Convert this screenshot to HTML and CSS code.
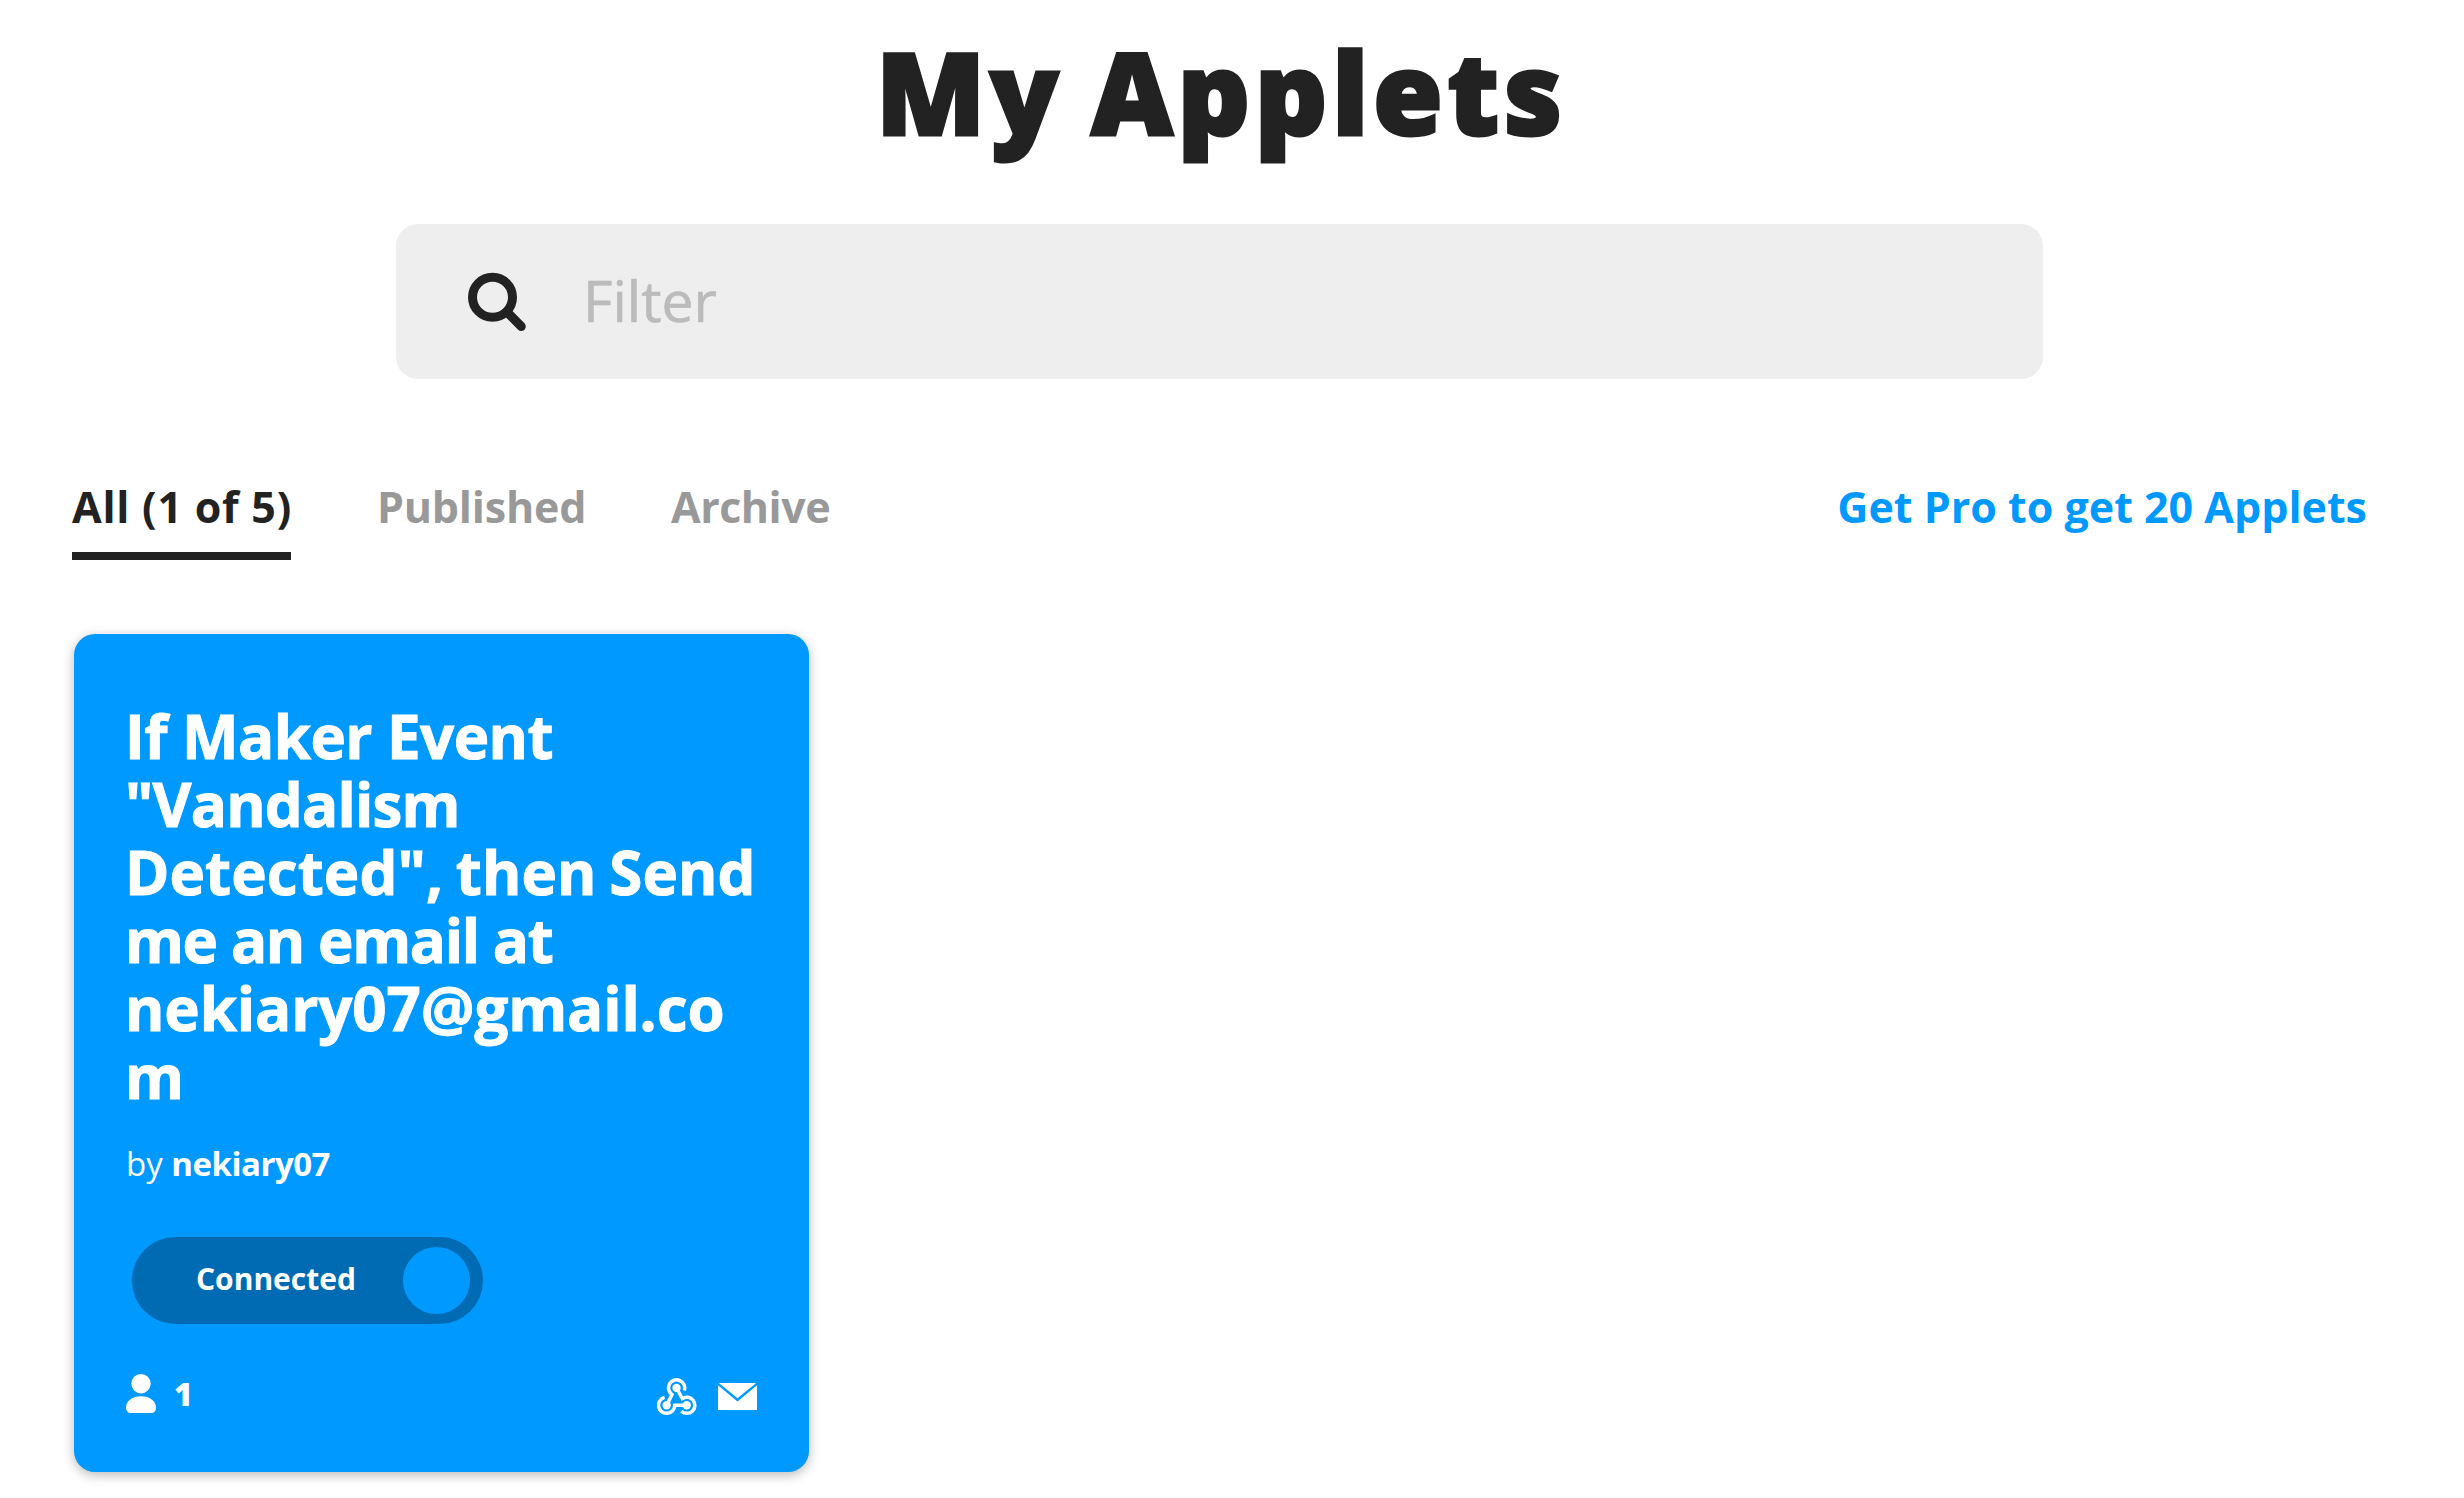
FILE: index.html
```html
<!DOCTYPE html>
<html lang="en">
<head>
<meta charset="utf-8">
<title>My Applets</title>
<link rel="stylesheet" href="styles.css">
</head>
<body>
<main class="page">
  <h1 class="page-title">My Applets</h1>
  <div class="search">
    <svg class="search-icon" viewBox="0 0 60 60" fill="none" stroke="#222" stroke-width="9" stroke-linecap="round">
      <circle cx="25.500" cy="25.300" r="20"/>
      <path d="M40 40L54.300 54.500"/>
    </svg>
    <span class="search-placeholder">Filter</span>
  </div>
  <nav class="tabs">
    <a class="tab tab-active">All (1 of 5)</a>
    <a class="tab tab-published">Published</a>
    <a class="tab tab-archive">Archive</a>
    <a class="pro-link">Get Pro to get 20 Applets</a>
  </nav>
  <article class="card">
    <h2 class="card-title">
      <span class="line line-1">If Maker Event</span>
      <span class="line line-2">"Vandalism</span>
      <span class="line line-3">Detected", then Send</span>
      <span class="line line-4">me an email at</span>
      <span class="line line-5">nekiary07@gmail.co</span>
      <span class="line">m</span>
    </h2>
    <p class="author">by <b>nekiary07</b></p>
    <div class="toggle">
      <span class="toggle-label">Connected</span>
      <span class="toggle-knob"></span>
    </div>
    <footer class="card-footer">
      <svg class="user-icon" viewBox="0 0 30 40" fill="#fff">
        <circle cx="15" cy="9.700" r="9.700"/>
        <path d="M15 22.200C23.500 22.200 30 27 30 33.500C30 37 28 39 25 39H5C2 39 0 37 0 33.500C0 27 6.500 22.200 15 22.200Z"/>
      </svg>
      <span class="count">1</span>
      <svg class="hook-icon" viewBox="0 0 40 38" fill="none" stroke="#fff" stroke-width="3.500">
        <g fill="#fff" stroke="none">
          <circle cx="19.500" cy="9.900" r="4.200"/>
          <circle cx="9.700" cy="27.200" r="4.200"/>
          <circle cx="29.700" cy="27.200" r="4.200"/>
        </g>
        <path d="M27.300 12.500A8.100 8.100 0 1 0 15 16.600L9.700 27.200"/>
        <path d="M7.600 19.400A8.100 8.100 0 1 0 17.700 27.200H29.700"/>
        <path d="M19.500 9.900L25.300 20.500A8.100 8.100 0 1 1 24.300 33.200"/>
      </svg>
      <svg class="mail-icon" viewBox="0 0 39 27" fill="#fff">
        <path d="M0.800 0H38.200L19.500 15.300Z"/>
        <path d="M0 2.300L19.500 18.600L39 2.300V27H0Z"/>
      </svg>
    </footer>
  </article>
</main>
</body>
</html>
```
FILE: styles.css
```css
* { box-sizing: border-box; }
body {
  margin: 0;
  background: #fff;
  color: #222;
  font-family: "Open Sans", sans-serif;
}
h1, h2, p { margin: 0; }
.page {
  display: flex;
  flex-direction: column;
  height: 1498px;
  padding: 31px 97px 0 72px;
  overflow: hidden;
}
.page-title {
  width: 692px;
  margin-left: 804px;
  font-size: 113px;
  line-height: 120px;
  font-weight: 800;
  letter-spacing: 4.5px;
  word-spacing: -6px;
  white-space: nowrap;
  -webkit-text-stroke: 3px #222;
}
.search {
  display: flex;
  align-items: center;
  width: 1647px;
  height: 155px;
  margin: 73px 0 0 324px;
  padding-left: 71px;
  border-radius: 22px;
  background: #eee;
}
.search-icon { width: 60px; height: 60px; }
.search-placeholder {
  margin-left: 56px;
  padding-bottom: 3px;
  color: #bbb;
  font-size: 57px;
  line-height: 78px;
  -webkit-text-stroke: .6px #bbb;
}
.tabs {
  display: flex;
  height: 84px;
  margin-top: 97px;
  padding-top: 1px;
  font-size: 43px;
  line-height: 60px;
  font-weight: 700;
  white-space: nowrap;
}
.tab { color: #999; }
.tab-active {
  width: 219px;
  border-bottom: 8px solid #222;
  color: #222;
  letter-spacing: .75px;
}
.tab-published { margin-left: 86px; width: 210px; letter-spacing: -.2px; }
.tab-archive { margin-left: 84px; letter-spacing: -.5px; }
.pro-link { margin-left: auto; color: #0099ff; }
.card {
  width: 735px;
  height: 838px;
  margin: 74px 0 0 2px;
  padding: 68px 52px 0;
  border-radius: 21px;
  background: #0099ff;
  box-shadow: 0 3px 12px rgba(0, 0, 0, .28);
  color: #fff;
}
.card-title {
  font-size: 60px;
  line-height: 68px;
  font-weight: 700;
  white-space: nowrap;
  -webkit-text-stroke: 1px #fff;
}
.line { display: block; margin-left: -1px; }
.line-1 { letter-spacing: -.55px; }
.line-2 { letter-spacing: -.8px; }
.line-3 { letter-spacing: .1px; word-spacing: -3px; }
.line-4 { letter-spacing: -1.35px; }
.line-5 { letter-spacing: -.1px; }
.author {
  margin: 32px 0 0;
  font-size: 33px;
  line-height: 44px;
}
.author b { letter-spacing: -.5px; }
.toggle {
  display: flex;
  align-items: center;
  justify-content: space-between;
  width: 351px;
  height: 87px;
  margin: 51px 0 0 6px;
  padding: 0 13px 0 64px;
  border-radius: 44px;
  background: #006bb3;
}
.toggle-label {
  padding-bottom: 4px;
  font-size: 30px;
  line-height: 40px;
  font-weight: 700;
}
.toggle-knob {
  width: 67px;
  height: 67px;
  border-radius: 50%;
  background: #0099ff;
}
.card-footer {
  display: flex;
  align-items: center;
  height: 40px;
  margin-top: 50px;
}
.user-icon { width: 30px; height: 40px; }
.count {
  margin-left: 18px;
  font-size: 32px;
  line-height: 40px;
  font-weight: 800;
}
.hook-icon { width: 40px; height: 38px; margin: 5px 0 0 auto; }
.mail-icon { width: 39px; height: 27px; margin: 4px 0 0 21px; }
```
